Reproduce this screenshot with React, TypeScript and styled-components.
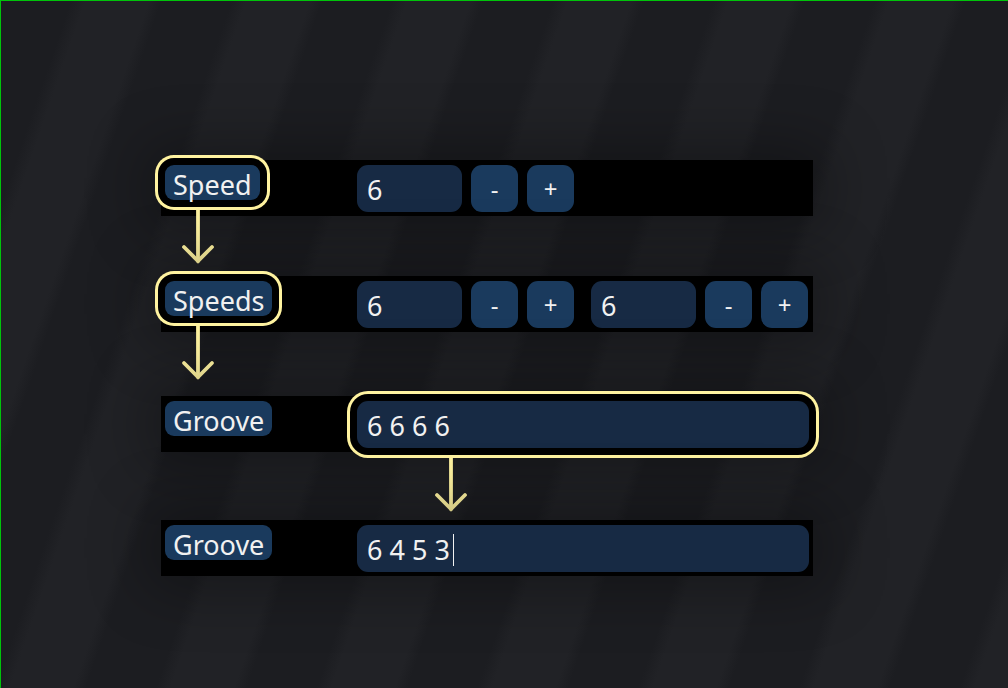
import styled, { createGlobalStyle, css } from "styled-components";

const GlobalStyle = createGlobalStyle`
  html, body {
    margin: 0;
    padding: 0;
  }
  body {
    font-family: "Noto Sans", "Open Sans", sans-serif;
    background: #1d1e22;
  }
`;

const highlight = css`
  box-shadow: 0 0 0 7px #000, 0 0 0 10px #fff3a0;
`;

const Page = styled.main`
  box-sizing: border-box;
  width: 1008px;
  height: 688px;
  overflow: hidden;
  border-top: 1px solid #00c40a;
  border-left: 1px solid #00c40a;
  padding: 159px 0 0 160px;
  background-color: #1d1e22;
  background-image: repeating-linear-gradient(
    109deg,
    #1c1d21 0px,
    #1c1d21 66px,
    #212226 80px,
    #212226 140px,
    #1c1d21 152px
  );
`;

const Stack = styled.div`
  width: 652px;
  display: flex;
  flex-direction: column;
`;

const Bar = styled.section`
  box-sizing: border-box;
  height: 56px;
  padding: 5px 4px 4px;
  display: grid;
  grid-template-columns: 192px 1fr;
  align-items: start;
  background: #000;
  box-shadow: 0 0 60px 14px rgba(0, 0, 0, 0.3);
`;

const Label = styled.span<{ $active?: boolean }>`
  justify-self: start;
  box-sizing: border-box;
  height: 35px;
  padding: 2px 8px 0;
  line-height: 35px;
  font-size: 27px;
  color: #f1f1f1;
  background: #1a3a5d;
  border-radius: 9px;
  ${(p) => p.$active && highlight}
`;

const Controls = styled.div`
  display: flex;
  gap: 17px;
`;

const Group = styled.div`
  display: flex;
  gap: 9px;
`;

const Field = styled.div<{ $wide?: boolean; $active?: boolean }>`
  box-sizing: border-box;
  width: ${(p) => (p.$wide ? "452px" : "105px")};
  height: 47px;
  padding: 2px 10px 0;
  display: flex;
  align-items: center;
  font-size: 27px;
  color: #f1f1f1;
  background: #172a44;
  border-radius: 11px;
  white-space: pre;
  ${(p) => p.$active && highlight}
`;

const Caret = styled.span`
  display: inline-block;
  width: 1px;
  height: 32px;
  margin-left: 3px;
  background: #f1f1f1;
`;

const StepButton = styled.button`
  width: 47px;
  height: 47px;
  padding: 0;
  border: none;
  border-radius: 11px;
  background: #1a3a5d;
  color: #f1f1f1;
  font-family: inherit;
  font-size: 24px;
  line-height: 47px;
`;

const Connector = styled.div<{ $height: number }>`
  display: flex;
  height: ${(p) => p.$height}px;
  overflow: visible;
`;

const ArrowSvg = styled.svg<{ $x: number; $y: number }>`
  display: block;
  flex: none;
  overflow: visible;
  margin-left: ${(p) => p.$x - 18}px;
  margin-top: ${(p) => p.$y}px;
`;

function Arrow({ x, y, height }: { x: number; y: number; height: number }) {
  return (
    <Connector $height={height}>
      <ArrowSvg $x={x} $y={y} width="36" height="56" viewBox="0 0 36 56">
        <g
          fill="none"
          stroke="#fff3a0"
          strokeWidth="3.8"
          strokeLinecap="round"
          strokeLinejoin="miter"
        >
          <line x1="18" y1="1" x2="18" y2="52" />
          <polyline points="4,38 18,52 32,38" />
        </g>
      </ArrowSvg>
    </Connector>
  );
}

function Stepper({ value }: { value: string }) {
  return (
    <Group>
      <Field>{value}</Field>
      <StepButton>-</StepButton>
      <StepButton>+</StepButton>
    </Group>
  );
}

export default function App() {
  return (
    <>
      <GlobalStyle />
      <Page>
        <Stack>
          <Bar>
            <Label $active>Speed</Label>
            <Controls>
              <Stepper value="6" />
            </Controls>
          </Bar>
          <Arrow x={37} y={-7} height={60} />
          <Bar>
            <Label $active>Speeds</Label>
            <Controls>
              <Stepper value="6" />
              <Stepper value="6" />
            </Controls>
          </Bar>
          <Arrow x={37} y={-7} height={64} />
          <Bar>
            <Label>Groove</Label>
            <Field $wide $active>
              6 6 6 6
            </Field>
          </Bar>
          <Arrow x={290} y={5} height={68} />
          <Bar>
            <Label>Groove</Label>
            <Field $wide>
              6 4 5 3
              <Caret />
            </Field>
          </Bar>
        </Stack>
      </Page>
    </>
  );
}
